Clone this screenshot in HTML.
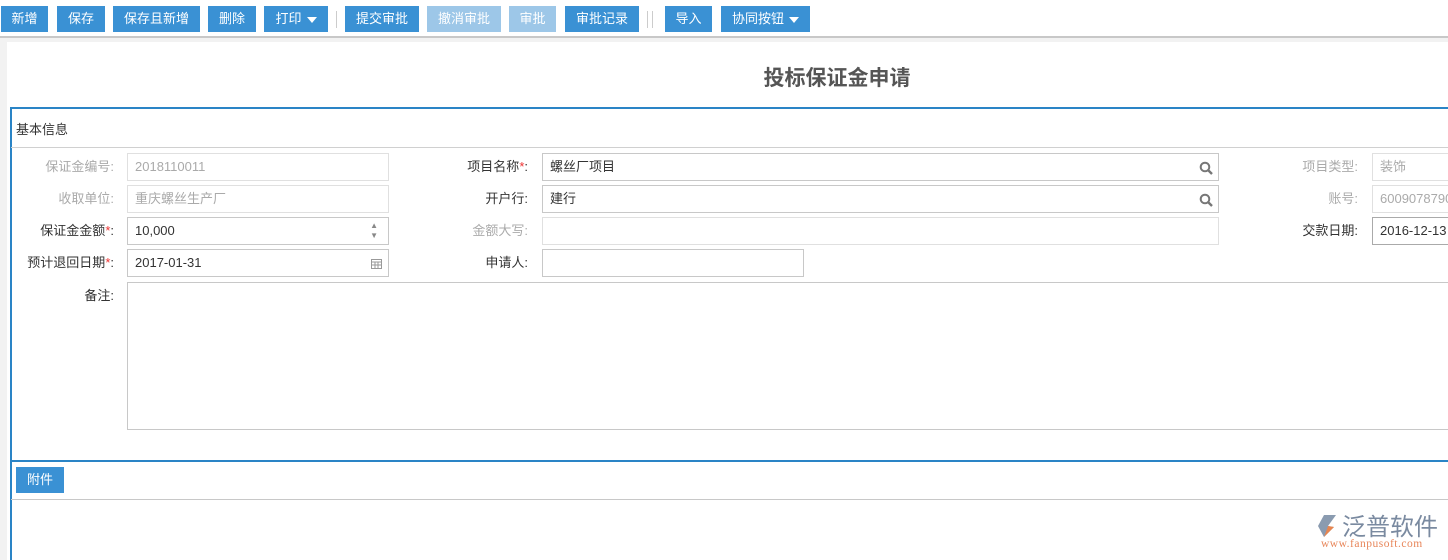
<!DOCTYPE html>
<html><head><meta charset="utf-8"><style>
*{margin:0;padding:0;box-sizing:border-box}
body{width:1448px;height:560px;overflow:hidden;background:#f2f2f2;font-family:"Liberation Sans","Noto Sans CJK SC",sans-serif;font-size:13px;color:#333;position:relative}
.tb{position:absolute;left:0;top:0;width:1448px;height:38px;background:#fff;border-bottom:2px solid #c8c8c8}
.b{position:absolute;top:6px;height:26px;background:#3a91d4;color:#fff;line-height:26px;text-align:center;font-size:13px}
.b.l{background:#9dc7e8}
.sep{position:absolute;top:11px;width:1px;height:17px;background:#ccc}
.tri{display:inline-block;width:0;height:0;border-left:5px solid transparent;border-right:5px solid transparent;border-top:6px solid #fff;vertical-align:middle;margin-left:5px}
.pg{position:absolute;left:7px;top:42px;width:1441px;height:518px;background:#fff}
.ttl{position:absolute;left:0;width:1448px;top:62px;text-align:center;font-size:21px;font-weight:bold;color:#555;padding-left:226px}
.box{position:absolute;left:10px;top:107px;width:1438px;height:453px;border-left:2px solid #2a84c6;border-top:2px solid #2a84c6}
.hl{position:absolute;left:11px;width:1437px;height:2px}
.lb{position:absolute;text-align:right;height:28px;line-height:28px}
.in{position:absolute;height:28px;border:1px solid #c8c8c8;background:#fff;line-height:26px;padding-left:7px}
.g{color:#aaa}.gi{border-color:#e0e0e0;color:#aaa}
.r{color:#e33}
</style></head><body>
<div class="tb">
<div class="b" style="left:1px;width:47px">新增</div>
<div class="b" style="left:57px;width:48px">保存</div>
<div class="b" style="left:113px;width:87px">保存且新增</div>
<div class="b" style="left:208px;width:48px">删除</div>
<div class="b" style="left:264px;width:64px">打印<span class="tri"></span></div>
<div class="sep" style="left:336px"></div>
<div class="b" style="left:345px;width:74px">提交审批</div>
<div class="b l" style="left:427px;width:74px">撤消审批</div>
<div class="b l" style="left:509px;width:47px">审批</div>
<div class="b" style="left:565px;width:74px">审批记录</div>
<div class="sep" style="left:647px"></div><div class="sep" style="left:652px"></div>
<div class="b" style="left:665px;width:47px">导入</div>
<div class="b" style="left:721px;width:89px">协同按钮<span class="tri"></span></div>
</div>
<div class="pg"></div>
<div class="ttl">投标保证金申请</div>
<div class="box"></div>
<div style="position:absolute;left:16px;top:119px;font-size:13px">基本信息</div>
<div class="hl" style="top:147px;height:1px;background:#d0d0d0"></div>

<div class="lb g" style="left:16px;width:98px;top:153px">保证金编号:</div>
<div class="in gi" style="left:127px;top:153px;width:262px">2018110011</div>
<div class="lb g" style="left:16px;width:98px;top:185px">收取单位:</div>
<div class="in gi" style="left:127px;top:185px;width:262px">重庆螺丝生产厂</div>
<div class="lb" style="left:6px;width:108px;top:217px">保证金金额<span class="r">*</span>:</div>
<div class="in" style="left:127px;top:217px;width:262px">10,000<span style="position:absolute;right:10px;top:0;font-size:8px;line-height:10px;color:#888;padding-top:3px">▲<br>▼</span></div>
<div class="lb" style="left:6px;width:108px;top:249px">预计退回日期<span class="r">*</span>:</div>
<div class="in" style="left:127px;top:249px;width:262px">2017-01-31<svg style="position:absolute;right:6px;top:8px" width="11" height="11" viewBox="0 0 11 11"><rect x="0.5" y="1.5" width="10" height="9" fill="none" stroke="#999"/><path d="M0 4h11M4 4v7M7 4v7M0 7h11" stroke="#999"/></svg></div>
<div class="lb" style="left:6px;width:108px;top:282px">备注:</div>
<div class="in" style="left:127px;top:282px;width:1330px;height:148px"></div>

<div class="lb" style="left:418px;width:110px;top:153px">项目名称<span class="r">*</span>:</div>
<div class="in" style="left:542px;top:153px;width:677px">螺丝厂项目<svg style="position:absolute;right:5px;top:7px" width="14" height="14" viewBox="0 0 14 14"><circle cx="6" cy="6" r="4.3" fill="none" stroke="#777" stroke-width="2"/><path d="M9 9l4 4" stroke="#777" stroke-width="2.4"/></svg></div>
<div class="lb" style="left:418px;width:110px;top:185px">开户行:</div>
<div class="in" style="left:542px;top:185px;width:677px">建行<svg style="position:absolute;right:5px;top:7px" width="14" height="14" viewBox="0 0 14 14"><circle cx="6" cy="6" r="4.3" fill="none" stroke="#777" stroke-width="2"/><path d="M9 9l4 4" stroke="#777" stroke-width="2.4"/></svg></div>
<div class="lb g" style="left:418px;width:110px;top:217px">金额大写:</div>
<div class="in gi" style="left:542px;top:217px;width:677px"></div>
<div class="lb" style="left:418px;width:110px;top:249px">申请人:</div>
<div class="in" style="left:542px;top:249px;width:262px"></div>

<div class="lb g" style="left:1248px;width:110px;top:153px">项目类型:</div>
<div class="in gi" style="left:1372px;top:153px;width:100px">装饰</div>
<div class="lb g" style="left:1248px;width:110px;top:185px">账号:</div>
<div class="in gi" style="left:1372px;top:185px;width:100px;white-space:nowrap;overflow:hidden">60090787901</div>
<div class="lb" style="left:1248px;width:110px;top:217px">交款日期:</div>
<div class="in" style="left:1372px;top:217px;width:100px;border-color:#aaa">2016-12-13</div>

<div class="hl" style="top:460px;background:#2a84c6"></div>
<div class="b" style="left:16px;top:467px;width:48px;height:26px">附件</div>
<div class="hl" style="top:499px;height:1px;background:#c8c8c8"></div>

<svg style="position:absolute;left:1318px;top:514px" width="22" height="24" viewBox="0 0 22 24"><path d="M6 1h12l-8 11 6 1-10 10L0 12z" fill="#8a9bb0"/><path d="M10 12l6 1-10 10 3-8z" fill="#e8854f"/></svg>
<div style="position:absolute;left:1342px;top:507px;font-size:24px;color:#7a8aa0;letter-spacing:0px;font-family:'Noto Sans CJK SC',sans-serif">泛普软件</div>
<div style="position:absolute;left:1321px;top:538px;font-size:11.5px;color:#e8865a;font-family:'Liberation Serif',serif;letter-spacing:.5px">www.fanpusoft.com</div>
</body></html>
